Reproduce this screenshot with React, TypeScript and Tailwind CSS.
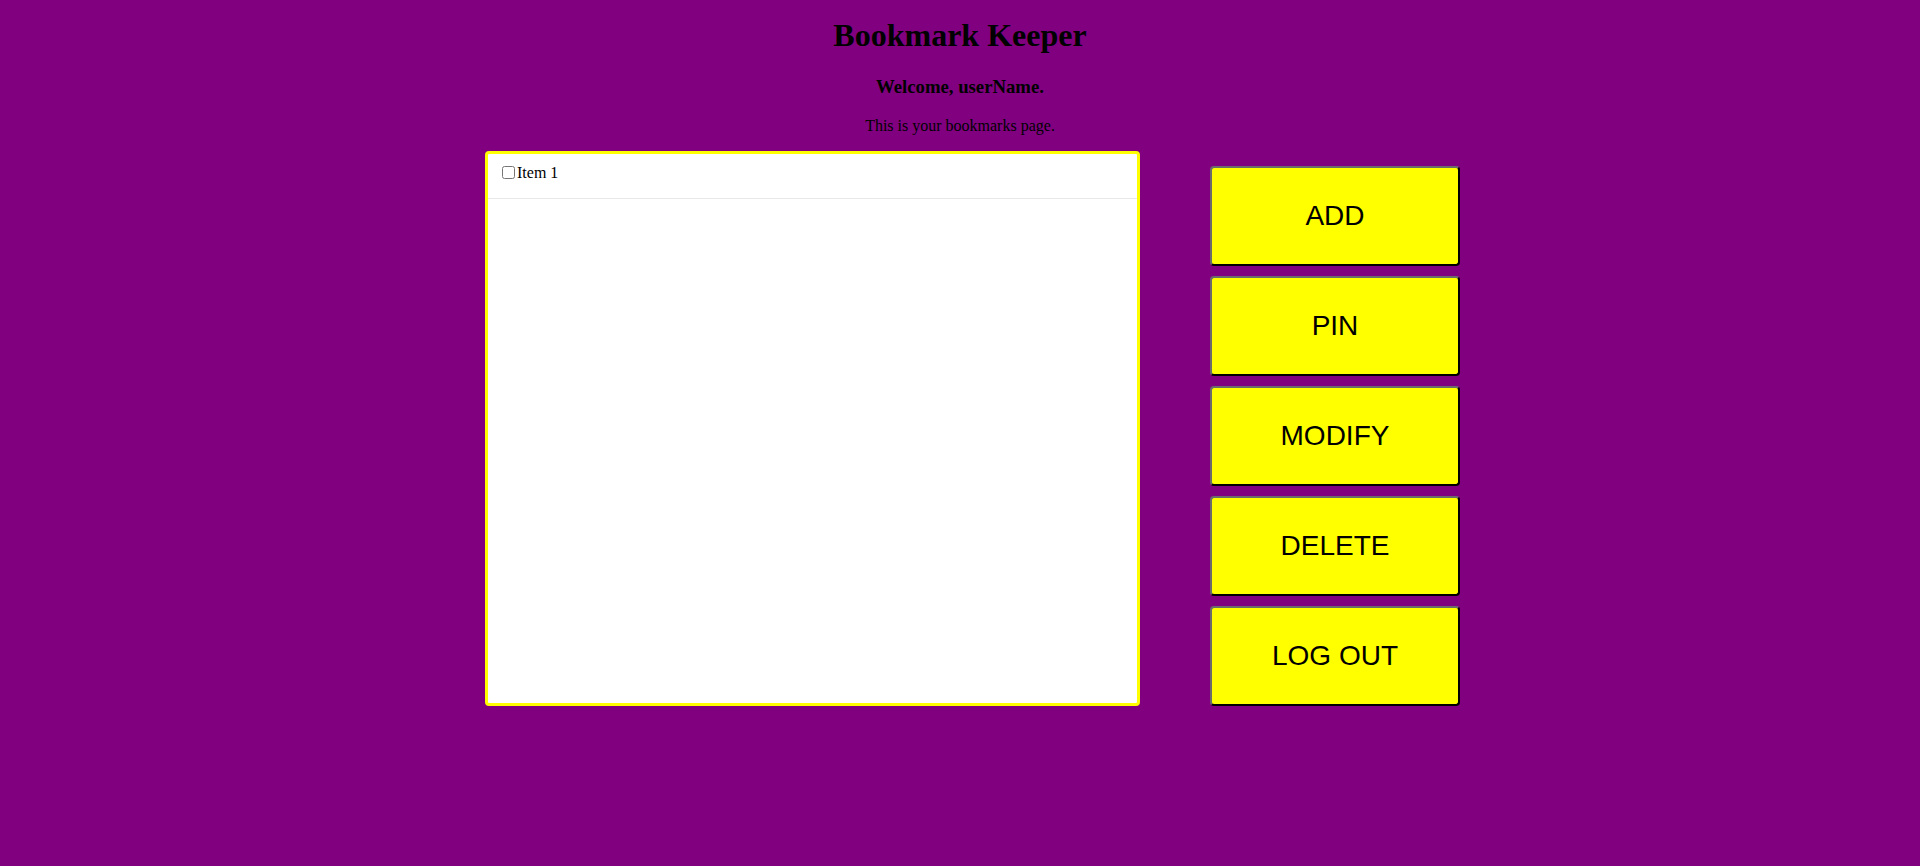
import React from "react";

const buttons = ["ADD", "PIN", "MODIFY", "DELETE", "LOG OUT"];

export default function App() {
  return (
    <div className="min-h-[866px] w-full bg-[#800080] text-black" style={{ fontFamily: '"Liberation Serif", "Times New Roman", serif' }}>
      <div className="flex flex-col items-center">
        <h1 className="mt-[17px] text-[32px] leading-[36px] font-bold">Bookmark Keeper</h1>
        <h3 className="mt-[23px] text-[18.72px] leading-[21px] font-bold">Welcome, userName.</h3>
        <p className="mt-[20px] text-[16px] leading-[18px]">This is your bookmarks page.</p>
      </div>
      <div className="mx-auto mt-[16px] flex w-[1000px] pl-[25px]">
        <div className="h-[555px] w-[656px] rounded-[4px] border-[3px] border-[#ffff00] bg-white">
          <div className="flex h-[45px] items-center border-b border-[#e8e8e8] pl-[14px] pb-[7px]">
            <input type="checkbox" className="m-0 h-[13px] w-[13px]" />
            <span className="ml-[2px] text-[16px] leading-[18px]">Item 1</span>
          </div>
        </div>
        <div className="ml-[70px] flex flex-col gap-[10px] pt-[15px]">
          {buttons.map((b) => (
            <button
              key={b}
              className="h-[100px] w-[250px] rounded-[4px] border-2 border-t-[#6b6b6b] border-l-[#6b6b6b] border-r-black border-b-black bg-[#ffff00] text-[28px] text-black"
              style={{ fontFamily: '"Liberation Sans", Arial, sans-serif' }}
            >
              {b}
            </button>
          ))}
        </div>
      </div>
    </div>
  );
}
